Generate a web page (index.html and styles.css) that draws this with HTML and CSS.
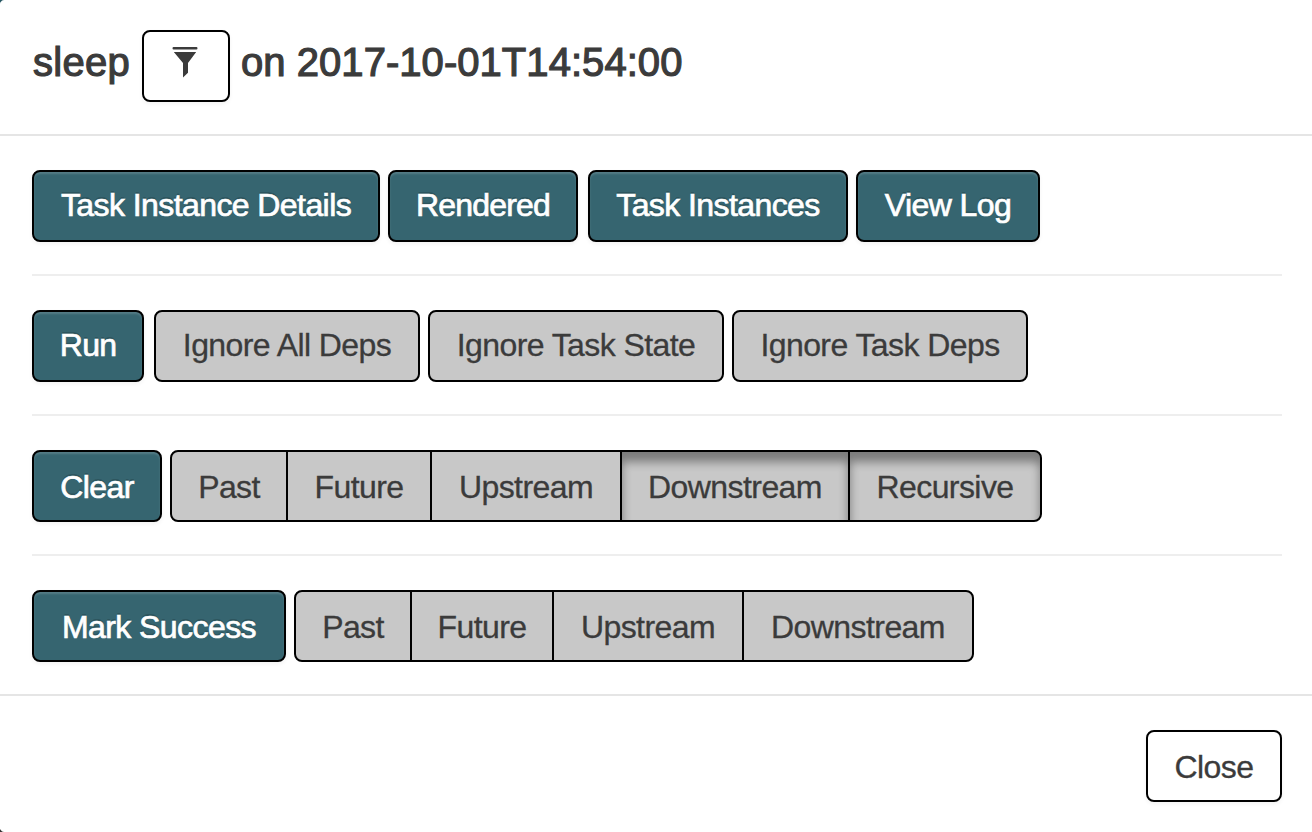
FILE: index.html
```html
<!DOCTYPE html>
<html lang="en">
<head>
<meta charset="utf-8">
<title>Task instance</title>
<link rel="stylesheet" href="styles.css">
</head>
<body>
<div class="modal">
  <header class="modal-header">
    <h4 class="title">
      <span class="task">sleep</span>
      <button class="btn btn-filter" aria-label="Filter">
        <svg width="26" height="31" viewBox="0 0 26 31"><path d="M1.6 0H24.4Q25.5 0 25.5 1.3T24.4 2.6H1.6Q.5 2.6 .5 1.3T1.6 0ZM1.8 5H24.2L16 16V25.8L11 30.5V16Z"/></svg>
      </button>
      <span class="date">on 2017-10-01T14:54:00</span>
    </h4>
  </header>
  <main class="modal-body">
    <div class="row raised">
      <button class="btn primary w348">Task Instance Details</button>
      <button class="btn primary w190 tight">Rendered</button>
      <button class="btn primary w260 wide-gap">Task Instances</button>
      <button class="btn primary w184">View Log</button>
    </div>
    <hr>
    <div class="row raised">
      <button class="btn primary w112 tight">Run</button>
      <button class="btn toggle w266 wide-gap">Ignore All Deps</button>
      <button class="btn toggle w296">Ignore Task State</button>
      <button class="btn toggle w296">Ignore Task Deps</button>
    </div>
    <hr>
    <div class="row">
      <button class="btn primary w130">Clear</button>
      <div class="group">
        <button class="btn toggle w118">Past</button>
        <button class="btn toggle w146">Future</button>
        <button class="btn toggle w192">Upstream</button>
        <button class="btn toggle active w230">Downstream</button>
        <button class="btn toggle active w194">Recursive</button>
      </div>
    </div>
    <hr>
    <div class="row">
      <button class="btn primary w254">Mark Success</button>
      <div class="group">
        <button class="btn toggle w118">Past</button>
        <button class="btn toggle w144">Future</button>
        <button class="btn toggle w192">Upstream</button>
        <button class="btn toggle w232">Downstream</button>
      </div>
    </div>
  </main>
  <footer class="modal-footer">
    <button class="btn w136">Close</button>
  </footer>
</div>
</body>
</html>
```
FILE: styles.css
```css
* { box-sizing: border-box; }
body {
  margin: 0;
  background: linear-gradient(#245561 50%, #333 50%);
  color: #3b3b3b;
  font-family: "Liberation Sans", Arial, sans-serif;
}
.modal {
  height: 832px;
  overflow: hidden;
  background: #fff;
  border-radius: 5px 0 0 5px / 8px 0 0 8px;
  margin-left: -1px;
  padding-left: 1px;
}
.modal-header {
  height: 136px;
  padding: 30px 32px 0;
  border-bottom: 2px solid #e5e5e5;
}
.title {
  display: flex;
  margin: 0;
  font-size: 40px;
  font-weight: 400;
  line-height: 65px;
  white-space: nowrap;
  -webkit-text-stroke: 1.2px #3b3b3b;
}
.task { width: 110px; padding-left: 1px; letter-spacing: 0.3px; }
.date { margin-left: 11px; letter-spacing: 0.05px; }
.modal-body { padding: 34px 30px 32px 32px; }
.row, .group { display: flex; }
.row { gap: 8px; }
.wide-gap { margin-left: 2px; }
hr {
  height: 2px;
  margin: 32px 0 34px;
  border: 0;
  background: #eee;
}
.btn {
  flex: none;
  height: 72px;
  padding: 2px 0 0;
  border: 2px solid #000;
  border-radius: 8px;
  background: #fff;
  color: #3b3b3b;
  font-family: inherit;
  font-size: 32px;
  line-height: 64px;
  letter-spacing: -0.58px;
  text-align: center;
  white-space: nowrap;
  -webkit-text-stroke: 0.3px #3b3b3b;
  box-shadow: 0 2px 4px rgba(0, 0, 0, 0.05);
}
.btn-filter {
  display: flex;
  justify-content: center;
  width: 88px;
  padding: 15px 2px 0 0;
}
.btn-filter svg { fill: #3b3b3b; }
.raised .btn:not(.btn-filter) { padding: 0 0 2px; }
.primary {
  background: #366570;
  color: #fff;
  -webkit-text-stroke: 0.7px #fff;
  text-shadow: 0 -2px 0 rgba(0, 0, 0, 0.18);
  box-shadow: inset 0 2px 2px rgba(255, 255, 255, 0.15), 0 2px 4px rgba(0, 0, 0, 0.05);
}
.tight { letter-spacing: -0.8px; }
.toggle { background: #c8c8c8; box-shadow: none; }
.active { box-shadow: inset 0 10px 10px rgba(0, 0, 0, 0.38); }
.group .btn { border-radius: 0; }
.group .btn + .btn { margin-left: -2px; }
.group .btn:first-child { border-radius: 8px 0 0 8px; }
.group .btn:last-child { border-radius: 0 8px 8px 0; }
.modal-footer {
  display: flex;
  justify-content: flex-end;
  height: 138px;
  padding: 34px 30px 0;
  border-top: 2px solid #e5e5e5;
}
.w112 { width: 112px; }
.w118 { width: 118px; }
.w130 { width: 130px; }
.w136 { width: 136px; }
.w144 { width: 144px; }
.w146 { width: 146px; }
.w184 { width: 184px; }
.w190 { width: 190px; }
.w192 { width: 192px; }
.w194 { width: 194px; }
.w230 { width: 230px; }
.w232 { width: 232px; }
.w254 { width: 254px; }
.w260 { width: 260px; }
.w266 { width: 266px; }
.w296 { width: 296px; }
.w348 { width: 348px; }
```
